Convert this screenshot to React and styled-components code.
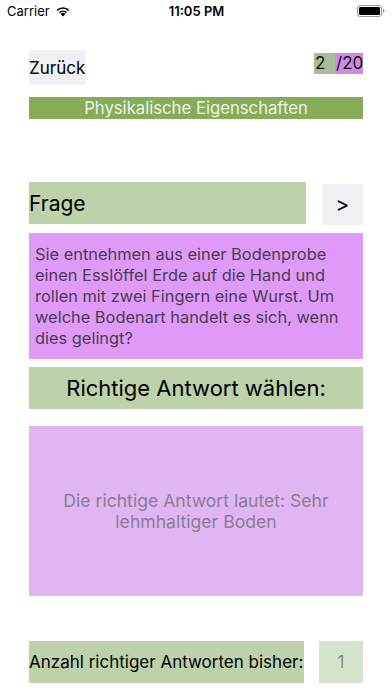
import React from "react";
import styled, { createGlobalStyle } from "styled-components";

const Global = createGlobalStyle`
  html, body { margin: 0; padding: 0; background: #ffffff; }
  body { font-family: Inter, "Liberation Sans", Arial, sans-serif; }
  * { box-sizing: border-box; }
`;

const Page = styled.div`
  width: 392px;
  height: 696px;
  background: #fff;
  display: flex;
  flex-direction: column;
  overflow: hidden;
`;

const StatusBar = styled.div`
  height: 22px;
  display: grid;
  grid-template-columns: 1fr auto 1fr;
  align-items: center;
  padding: 0 6px 0 7px;
  font-size: 13px;
  color: #000;
`;

const StatusLeft = styled.div`
  display: flex;
  align-items: center;
  gap: 5px;
`;

const Time = styled.div`
  font-weight: 600;
  font-size: 13px;
`;

const StatusRight = styled.div`
  display: flex;
  justify-content: flex-end;
  align-items: center;
`;

const Content = styled.div`
  display: flex;
  flex-direction: column;
  padding: 28px 29px 0 29px;
`;

const TopRow = styled.div`
  display: flex;
  justify-content: space-between;
  align-items: flex-start;
`;

const GreyButton = styled.div`
  background: #efeff4;
  color: #000;
  display: flex;
  align-items: center;
  justify-content: ${(p) => (p.$center ? "center" : "flex-start")};
  width: ${(p) => p.$w}px;
  height: ${(p) => p.$h}px;
  font-size: ${(p) => p.$fs}px;
  margin-top: ${(p) => p.$mt || 0}px;
  white-space: nowrap;
`;

const Counter = styled.div`
  display: flex;
  margin-top: 3px;
  height: 21px;
  font-size: 17px;
  line-height: 21px;
`;

const CounterCell = styled.span`
  background: ${(p) => p.$bg};
  width: ${(p) => p.$w}px;
  padding-left: 1px;
  color: #111;
`;

const Category = styled.div`
  margin-top: 12px;
  height: 22px;
  background: #86ac58;
  color: #eef4e6;
  font-size: 16.7px;
  display: flex;
  align-items: center;
  justify-content: center;
`;

const FrageRow = styled.div`
  margin-top: 63px;
  display: flex;
  justify-content: space-between;
  align-items: flex-start;
`;

const GreenLabel = styled.div`
  background: #bdd1ab;
  color: #000;
  height: 42px;
  width: ${(p) => p.$w || 334}px;
  font-size: ${(p) => p.$fs}px;
  display: flex;
  align-items: center;
  justify-content: ${(p) => (p.$center ? "center" : "flex-start")};
  margin-top: ${(p) => p.$mt || 0}px;
  white-space: nowrap;
`;

const Question = styled.div`
  margin-top: 8px;
  height: 126px;
  background: #df9af7;
  color: #4b3c55;
  font-size: 16.4px;
  line-height: 21px;
  padding: 0 6px;
  display: flex;
  align-items: center;
`;

const Answer = styled.div`
  margin-top: 17px;
  height: 170px;
  background: #dfb5f3;
  color: #8c7d94;
  font-size: 17.6px;
  line-height: 21px;
  text-align: center;
  display: flex;
  align-items: center;
  justify-content: center;
  padding: 0 28px;
`;

const BottomRow = styled.div`
  margin-top: 45px;
  display: flex;
  justify-content: space-between;
`;

const ScoreBox = styled.div`
  width: 44px;
  height: 42px;
  background: #d6e2cc;
  color: #8a8a8a;
  font-size: 17px;
  display: flex;
  align-items: center;
  justify-content: center;
`;

const Wifi = () => (
  <svg width="16" height="12" viewBox="0 0 16 12">
    <path d="M8 11.5 L5.6 8.9 A3.4 3.4 0 0 1 10.4 8.9 Z" fill="#000" />
    <path d="M3.9 7.1 A5.8 5.8 0 0 1 12.1 7.1 L10.9 8.3 A4.1 4.1 0 0 0 5.1 8.3 Z" fill="#000" />
    <path d="M1.6 4.8 A9 9 0 0 1 14.4 4.8 L13.2 6 A7.3 7.3 0 0 0 2.8 6 Z" fill="#000" />
  </svg>
);

const Battery = () => (
  <svg width="29" height="12" viewBox="0 0 29 12">
    <rect x="0.5" y="0.5" width="24" height="11" rx="2.5" fill="none" stroke="#999" />
    <rect x="2" y="2" width="21" height="8" rx="1.2" fill="#000" />
    <path d="M26 4 Q27.5 4 27.5 6 Q27.5 8 26 8 Z" fill="#999" />
  </svg>
);

export default function App() {
  return (
    <Page>
      <Global />
      <StatusBar>
        <StatusLeft>
          <span>Carrier</span>
          <Wifi />
        </StatusLeft>
        <Time>11:05 PM</Time>
        <StatusRight>
          <Battery />
        </StatusRight>
      </StatusBar>
      <Content>
        <TopRow>
          <GreyButton $w={57} $h={35} $fs={17}>Zurück</GreyButton>
          <Counter>
            <CounterCell $bg="#a9bc98" $w={21}>2</CounterCell>
            <CounterCell $bg="#cb8ae4" $w={28}>/20</CounterCell>
          </Counter>
        </TopRow>
        <Category>Physikalische Eigenschaften</Category>
        <FrageRow>
          <GreenLabel $w={277} $fs={21}>Frage</GreenLabel>
          <GreyButton $w={41} $h={41} $fs={21} $center $mt={2}>&gt;</GreyButton>
        </FrageRow>
        <Question>
          Sie entnehmen aus einer Bodenprobe einen Esslöffel Erde auf die Hand und rollen mit zwei Fingern eine Wurst. Um welche Bodenart handelt es sich, wenn dies gelingt?
        </Question>
        <GreenLabel $fs={22} $center $mt={8}>Richtige Antwort wählen:</GreenLabel>
        <Answer>Die richtige Antwort lautet: Sehr lehmhaltiger Boden</Answer>
        <BottomRow>
          <GreenLabel $w={275} $fs={17}>Anzahl richtiger Antworten bisher:</GreenLabel>
          <ScoreBox>1</ScoreBox>
        </BottomRow>
      </Content>
    </Page>
  );
}
